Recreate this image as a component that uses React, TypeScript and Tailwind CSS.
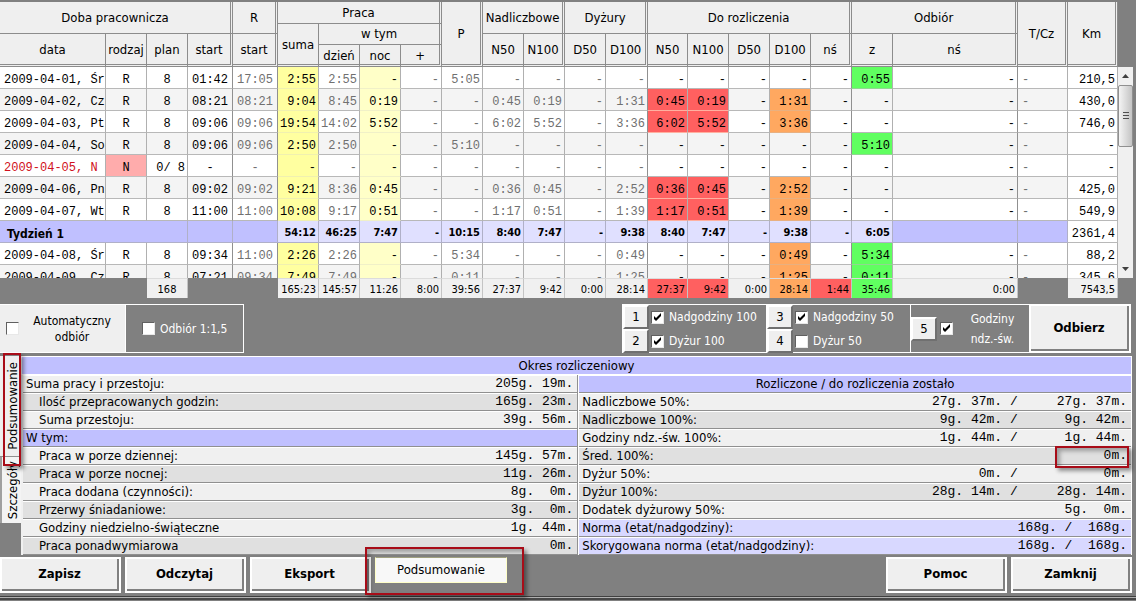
import { useState } from "react";
import type { ReactNode } from "react";
import clsx from "clsx";

type Align = "left" | "center" | "right";

type Column = {
  key: string;
  width: string;
  align: Align;
  muted?: boolean;
  groupEnd?: boolean;
};

const columns: Column[] = [
  { key: "data", width: "w-[106px]", align: "left" },
  { key: "rodzaj", width: "w-[41px]", align: "center" },
  { key: "plan", width: "w-[41px]", align: "center" },
  { key: "start", width: "w-[45px]", align: "center", groupEnd: true },
  { key: "rStart", width: "w-[45px]", align: "center", muted: true, groupEnd: true },
  { key: "suma", width: "w-[41px]", align: "right" },
  { key: "dzien", width: "w-[41px]", align: "right", muted: true },
  { key: "noc", width: "w-[41px]", align: "right" },
  { key: "plus", width: "w-[41px]", align: "right", muted: true },
  { key: "p", width: "w-[41px]", align: "right", muted: true },
  { key: "nadN50", width: "w-[41px]", align: "right", muted: true },
  { key: "nadN100", width: "w-[41px]", align: "right", muted: true },
  { key: "dyzD50", width: "w-[41px]", align: "right", muted: true },
  { key: "dyzD100", width: "w-[42px]", align: "right", muted: true, groupEnd: true },
  { key: "n50", width: "w-[40px]", align: "right" },
  { key: "n100", width: "w-[41px]", align: "right" },
  { key: "d50", width: "w-[41px]", align: "right" },
  { key: "d100", width: "w-[41px]", align: "right" },
  { key: "ns", width: "w-[41px]", align: "right", groupEnd: true },
  { key: "z", width: "w-[41px]", align: "right" },
  { key: "odbiorNs", width: "", align: "right", groupEnd: true },
  { key: "tcz", width: "w-[50px]", align: "left", muted: true },
  { key: "km", width: "w-[50px]", align: "right" },
];

const days: string[][] = [
  ["2009-04-01, Śr", "R", "8", "01:42", "17:05", "2:55", "2:55", "-", "-", "5:05", "-", "-", "-", "-", "-", "-", "-", "-", "-", "0:55", "-", "-", "210,5"],
  ["2009-04-02, Cz", "R", "8", "08:21", "08:21", "9:04", "8:45", "0:19", "-", "-", "0:45", "0:19", "-", "1:31", "0:45", "0:19", "-", "1:31", "-", "-", "-", "-", "430,0"],
  ["2009-04-03, Pt", "R", "8", "09:06", "09:06", "19:54", "14:02", "5:52", "-", "-", "6:02", "5:52", "-", "3:36", "6:02", "5:52", "-", "3:36", "-", "-", "-", "-", "746,0"],
  ["2009-04-04, So", "R", "8", "09:06", "09:06", "2:50", "2:50", "-", "-", "5:10", "-", "-", "-", "-", "-", "-", "-", "-", "-", "5:10", "-", "-", "-"],
  ["2009-04-05, N", "N", "0/ 8", "-", "-", "-", "-", "-", "-", "-", "-", "-", "-", "-", "-", "-", "-", "-", "-", "-", "-", "-", "-"],
  ["2009-04-06, Pn", "R", "8", "09:02", "09:02", "9:21", "8:36", "0:45", "-", "-", "0:36", "0:45", "-", "2:52", "0:36", "0:45", "-", "2:52", "-", "-", "-", "-", "425,0"],
  ["2009-04-07, Wt", "R", "8", "11:00", "11:00", "10:08", "9:17", "0:51", "-", "-", "1:17", "0:51", "-", "1:39", "1:17", "0:51", "-", "1:39", "-", "-", "-", "-", "549,9"],
];

const nextDays: string[][] = [
  ["2009-04-08, Śr", "R", "8", "09:34", "11:00", "2:26", "2:26", "-", "-", "5:34", "-", "-", "-", "0:49", "-", "-", "-", "0:49", "-", "5:34", "-", "-", "88,2"],
  ["2009-04-09, Cz", "R", "8", "07:21", "09:34", "7:49", "7:49", "-", "-", "0:11", "-", "-", "-", "1:25", "-", "-", "-", "1:25", "-", "0:11", "-", "-", "345,6"],
];

const week = ["54:12", "46:25", "7:47", "-", "10:15", "8:40", "7:47", "-", "9:38", "8:40", "7:47", "-", "9:38", "-", "6:05"];

const totals = ["", "", "168", "", "", "165:23", "145:57", "11:26", "8:00", "39:56", "27:37", "9:42", "0:00", "28:14", "27:37", "9:42", "0:00", "28:14", "1:44", "35:46", "0:00", "", "7543,5"];

const alignClass: Record<Align, string> = {
  left: "text-left pl-1",
  center: "text-center",
  right: "text-right pr-[2px]",
};

const Columns = () => (
  <colgroup>
    {columns.map((c) => (
      <col key={c.key} className={c.width} />
    ))}
  </colgroup>
);

const cellColor = (key: string, value: string, striped: boolean) => {
  if (key === "suma") return "bg-[#ffffa0] border-b-[#f0f0b0]";
  if (key === "noc") return "bg-[#ffffc8] border-b-[#f0f0c8]";
  if (key === "rodzaj" && value === "N") return "bg-[#ffacac] border-b-[#c0c0c0]";
  if (value !== "-") {
    if (key === "n50" || key === "n100") return "bg-[#ff6060] border-b-[#ffb0a0]";
    if (key === "d100") return "bg-[#ffa860] border-b-[#e8b080]";
    if (key === "z") return "bg-[#60ff60] border-b-[#90d890]";
  }
  if (key === "km") return "bg-white border-b-[#b8b8b8]";
  return striped ? "bg-[#f4f4f4] border-b-[#b8b8b8]" : "bg-white border-b-[#b8b8b8]";
};

const DayRow = ({ values, striped }: { values: string[]; striped: boolean }) => {
  const sunday = values[1] === "N";
  return (
    <tr className="h-[22px]">
      {columns.map((c, i) => (
        <td
          key={c.key}
          className={clsx(
            "border-r border-b pt-1 whitespace-pre",
            c.groupEnd ? "border-r-[#909090]" : "border-r-[#b0b0b0]",
            sunday && c.key === "plan" ? "text-right pr-[2px]" : alignClass[c.align],
            cellColor(c.key, values[i], striped),
            sunday && i === 0 ? "text-[#d01020]" : c.muted ? "text-[#707070]" : "text-black"
          )}
        >
          {values[i]}
        </td>
      ))}
    </tr>
  );
};

const WeekRow = () => (
  <tr className="h-[22px] font-['DejaVu_Sans_Condensed','Open_Sans',sans-serif] text-[11px] font-bold">
    <td colSpan={3} className="border-r border-b border-[#b0b0c8] bg-[#c0c0ff] pt-1 pl-[7px] text-xs">
      Tydzień 1
    </td>
    <td className="border-r border-b border-[#b0b0c8] bg-[#c0c0ff]" />
    <td className="border-r border-b border-[#b0b0c8] bg-[#c0c0ff]" />
    {week.map((value, i) => (
      <td key={i} className="border-r border-b border-[#b0b0c8] bg-[#e0e0ff] pt-[2px] pr-[2px] text-right">
        {value}
      </td>
    ))}
    <td className="border-r border-b border-[#b0b0c8] bg-[#c0c0ff]" />
    <td className="border-r border-b border-[#b0b0c8] bg-[#c0c0ff]" />
    <td className="border-r border-b border-[#b8b8b8] bg-white pt-1 pr-[2px] text-right font-['Liberation_Mono',monospace] text-xs font-normal">
      2361,4
    </td>
  </tr>
);

const Head = ({
  children,
  col = 1,
  row = 1,
  last,
  bottom,
}: {
  children: ReactNode;
  col?: number;
  row?: number;
  last?: boolean;
  bottom?: boolean;
}) => (
  <th
    colSpan={col}
    rowSpan={row}
    className={clsx(
      "border-[#8c8c8c] bg-[#efefef] font-normal",
      last ? "border-r-3 [border-right-style:double]" : "border-r",
      bottom ? "border-b-3 pt-[2px] [border-bottom-style:double]" : "border-b"
    )}
  >
    {children}
  </th>
);

const TimeSheet = () => (
  <section>
    <div className="pt-[2px] pr-[18px]">
      <table className="w-full table-fixed border-separate border-spacing-0 text-[13px] leading-4">
        <Columns />
        <thead>
          <tr className="h-[22px]">
            <Head col={4} row={2} last>Doba pracownicza</Head>
            <Head row={2} last>R</Head>
            <Head col={4} last>Praca</Head>
            <Head row={4} last bottom>P</Head>
            <Head col={2} row={2} last>Nadliczbowe</Head>
            <Head col={2} row={2} last>Dyżury</Head>
            <Head col={5} row={2} last>Do rozliczenia</Head>
            <Head col={2} row={2} last>Odbiór</Head>
            <Head row={4} last bottom>T/Cz</Head>
            <Head row={4} last bottom>Km</Head>
          </tr>
          <tr className="h-[10px]">
            <Head row={3} bottom>suma</Head>
            <Head col={3} row={2} last>w tym</Head>
          </tr>
          <tr className="h-[11px]">
            <Head row={2} bottom>data</Head>
            <Head row={2} bottom>rodzaj</Head>
            <Head row={2} bottom>plan</Head>
            <Head row={2} last bottom>start</Head>
            <Head row={2} last bottom>start</Head>
            <Head row={2} bottom>N50</Head>
            <Head row={2} last bottom>N100</Head>
            <Head row={2} bottom>D50</Head>
            <Head row={2} last bottom>D100</Head>
            <Head row={2} bottom>N50</Head>
            <Head row={2} bottom>N100</Head>
            <Head row={2} bottom>D50</Head>
            <Head row={2} bottom>D100</Head>
            <Head row={2} last bottom>nś</Head>
            <Head row={2} bottom>z</Head>
            <Head row={2} last bottom>nś</Head>
          </tr>
          <tr className="h-[22px]">
            <Head bottom>dzień</Head>
            <Head bottom>noc</Head>
            <Head last bottom>+</Head>
          </tr>
        </thead>
      </table>
    </div>

    <div className="flex h-[211px] overflow-hidden pr-[3px]">
      <div className="min-w-0 flex-1">
        <table className="w-full table-fixed border-separate border-spacing-0 font-['Liberation_Mono',monospace] text-xs leading-4">
          <Columns />
          <tbody>
            {days.map((d, i) => (
              <DayRow key={d[0]} values={d} striped={i % 2 === 1} />
            ))}
            <WeekRow />
            {nextDays.map((d, i) => (
              <DayRow key={d[0]} values={d} striped={i % 2 === 1} />
            ))}
          </tbody>
        </table>
      </div>
      <div className="flex w-[15px] flex-col bg-[#f0f0f0]">
        <svg viewBox="0 0 15 18" className="h-[18px] w-[15px]">
          <path d="M4 11 L7.5 7 L11 11 Z" fill="#404040" />
        </svg>
        <div className="flex h-[62px] flex-col items-center justify-center gap-px rounded-xs border border-[#909090] bg-linear-to-r from-[#f4f4f4] to-[#c4c4c4]">
          <span className="h-[2px] w-[6px] border-t border-[#505050]" />
          <span className="h-[2px] w-[6px] border-t border-[#505050]" />
          <span className="h-[2px] w-[6px] border-t border-[#505050]" />
        </div>
        <svg viewBox="0 0 15 18" className="mt-auto h-[18px] w-[15px]">
          <path d="M4 7 L7.5 11 L11 7 Z" fill="#404040" />
        </svg>
      </div>
    </div>

    <div className="pr-[18px]">
      <table className="w-full table-fixed border-separate border-spacing-0 text-[11px] leading-4">
        <Columns />
        <tbody>
          <tr className="h-5">
            {columns.map((c, i) => (
              <td
                key={c.key}
                className={clsx(
                  "pt-[2px]",
                  totals[i] && "border-t border-r border-t-[#dcdcdc] border-r-[#c4c4c4]",
                  c.key === "plan" ? "text-center" : "pr-[2px] text-right",
                  totals[i] &&
                    (c.key === "n50" || c.key === "n100" || c.key === "ns"
                      ? "bg-[#ff6060]"
                      : c.key === "d100"
                        ? "bg-[#ffa860]"
                        : c.key === "z"
                          ? "bg-[#60ff60]"
                          : "bg-[#f0f0f0]")
                )}
              >
                {totals[i]}
              </td>
            ))}
          </tr>
        </tbody>
      </table>
    </div>
  </section>
);

const Check = ({ checked, onChange, id }: { checked: boolean; onChange: () => void; id: string }) => (
  <span className="relative flex size-[13px] shrink-0">
    <input
      id={id}
      type="checkbox"
      checked={checked}
      onChange={onChange}
      className="size-[13px] appearance-none border border-t-[#606060] border-r-[#e8e8e8] border-b-[#e8e8e8] border-l-[#606060] bg-white"
    />
    {checked && (
      <svg viewBox="0 0 13 13" className="pointer-events-none absolute inset-0">
        <path d="M3 5 L5 7 L10 2 V5 L5 10 L3 8 Z" fill="#000" />
      </svg>
    )}
  </span>
);

const NumberButton = ({ children }: { children: ReactNode }) => (
  <button className="h-6 w-[26px] border-2 border-t-white border-r-[#707070] border-b-[#707070] border-l-white bg-[#efefef] text-[13px] leading-4">
    {children}
  </button>
);

const BigButton = ({ children, className }: { children: ReactNode; className: string }) => (
  <button className={clsx("border-2 border-white bg-[#efefef] text-[13px] font-bold", className)}>
    <span className="flex size-full items-center justify-center border-r-2 border-b-2 border-[#808080]">{children}</span>
  </button>
);

const Toolbar = () => {
  const [checks, setChecks] = useState<Record<string, boolean>>({
    auto: false,
    ratio: false,
    nad100: true,
    dyz100: true,
    nad50: true,
    dyz50: false,
    ns: true,
  });
  const check = (id: string) => (
    <Check id={id} checked={checks[id]} onChange={() => setChecks({ ...checks, [id]: !checks[id] })} />
  );

  return (
    <section className="mt-[6px] flex h-[49px] pr-[5px] text-xs leading-4">
      <div className="flex w-[125px] items-center border-t border-b border-white bg-[#efefef] pl-[6px]">
        {check("auto")}
        <label htmlFor="auto" className="flex-1 text-center">
          Automatyczny
          <br />
          odbiór
        </label>
      </div>
      <div className="flex w-[119px] items-center gap-[5px] border border-white pl-4 text-white">
        {check("ratio")}
        <label htmlFor="ratio">Odbiór 1:1,5</label>
      </div>
      <div className="ml-auto flex border-t border-b border-l border-white text-white">
        {[
          [["1", "nad100", "Nadgodziny 100"], ["2", "dyz100", "Dyżur 100"]],
          [["3", "nad50", "Nadgodziny 50"], ["4", "dyz50", "Dyżur 50"]],
        ].map((group, i) => (
          <div key={i} className="w-[144px] border-r border-white">
            {group.map(([no, id, text]) => (
              <div key={id} className="flex h-6 items-center gap-[2px]">
                <span className="text-black">
                  <NumberButton>{no}</NumberButton>
                </span>
                {check(id)}
                <label htmlFor={id} className="pl-[3px] whitespace-nowrap">
                  {text}
                </label>
              </div>
            ))}
          </div>
        ))}
        <div className="flex w-[118px] items-center gap-[3px]">
          <span className="text-black">
            <NumberButton>5</NumberButton>
          </span>
          {check("ns")}
          <label htmlFor="ns" className="flex-1 text-center leading-5">
            Godziny
            <br />
            ndz.-św.
          </label>
        </div>
      </div>
      <BigButton className="w-[102px]">Odbierz</BigButton>
    </section>
  );
};

type SummaryRow = { label: string; value?: string; kind?: "head" | "norm"; level?: number; marked?: boolean };

const leftRows: SummaryRow[] = [
  { label: "Suma pracy i przestoju:", value: "205g. 19m." },
  { label: "Ilość przepracowanych godzin:", value: "165g. 23m.", level: 1 },
  { label: "Suma przestoju:", value: "39g. 56m.", level: 1 },
  { label: "W tym:", kind: "head" },
  { label: "Praca w porze dziennej:", value: "145g. 57m.", level: 1 },
  { label: "Praca w porze nocnej:", value: "11g. 26m.", level: 1 },
  { label: "Praca dodana (czynności):", value: "8g.  0m.", level: 1 },
  { label: "Przerwy śniadaniowe:", value: "3g.  0m.", level: 1 },
  { label: "Godziny niedzielno-świąteczne", value: "1g. 44m.", level: 1 },
  { label: "Praca ponadwymiarowa", value: "0m.", level: 1 },
];

const rightRows: SummaryRow[] = [
  { label: "Nadliczbowe 50%:", value: "27g. 37m. /     27g. 37m." },
  { label: "Nadliczbowe 100%:", value: "9g. 42m. /      9g. 42m." },
  { label: "Godziny ndz.-św. 100%:", value: "1g. 44m. /      1g. 44m." },
  { label: "Śred. 100%:", value: "0m.", marked: true },
  { label: "Dyżur 50%:", value: "0m. /           0m." },
  { label: "Dyżur 100%:", value: "28g. 14m. /     28g. 14m." },
  { label: "Dodatek dyżurowy 50%:", value: "5g.  0m." },
  { label: "Norma (etat/nadgodziny):", value: "168g. /  168g.", kind: "norm" },
  { label: "Skorygowana norma (etat/nadgodziny):", value: "168g. /  168g.", kind: "norm" },
];

const SummaryTable = ({ rows, title }: { rows: SummaryRow[]; title?: string }) => (
  <table className="w-full border-separate border-spacing-0">
    {title && (
      <thead>
        <tr className="h-[18px]">
          <th colSpan={2} className="border-t border-b border-t-white border-b-[#909090] bg-[#c0c0ff] font-normal">
            {title}
          </th>
        </tr>
      </thead>
    )}
    <tbody>
      {rows.map((r, i) => {
        const tone = clsx(
          "border-t border-b border-t-white border-b-[#909090]",
          r.kind === "head"
            ? "bg-[#c0c0ff]"
            : r.kind === "norm"
              ? "bg-[#d8d8ff]"
              : i % 2 === 1
                ? "bg-[#e0e0e0]"
                : "bg-[#f0f0f0]"
        );
        return (
          <tr key={r.label} className="h-[18px]">
            <th scope="row" className={clsx(tone, "text-left font-normal", r.level ? "pl-4" : "pl-[3px]")}>
              {r.label}
            </th>
            <td
              className={clsx(
                tone,
                "pr-1 text-right font-['Liberation_Mono',monospace] whitespace-pre",
                r.marked && "relative"
              )}
            >
              {r.value}
              {r.marked && (
                <span className="absolute -top-[2px] right-[2px] h-[22px] w-[74px] border-2 border-[#a80c18] shadow-[3px_3px_4px_rgba(0,0,0,0.4),inset_3px_3px_4px_rgba(0,0,0,0.3)]" />
              )}
            </td>
          </tr>
        );
      })}
    </tbody>
  </table>
);

const Summary = () => (
  <section className="mt-[3px] flex pr-[4px] text-[13px] leading-4">
    <div className="relative w-[21px] shrink-0">
      <div className="flex flex-col">
        <button className="flex h-[101px] items-center justify-center border-b border-[#909090] bg-[#efefef] pl-1">
          <span className="rotate-180 [writing-mode:vertical-rl]">Podsumowanie</span>
        </button>
        <button className="flex h-[66px] items-center justify-center border-l-2 border-[#a0a0a0] bg-[#f4f4f4] pl-[2px]">
          <span className="rotate-180 [writing-mode:vertical-rl]">Szczegóły</span>
        </button>
      </div>
      <div className="pointer-events-none absolute -top-[3px] left-[3px] h-[113px] w-[18px] border-2 border-[#a80c18] shadow-[3px_3px_4px_rgba(0,0,0,0.4)]" />
    </div>
    <div className="min-w-0 flex-1 border-t border-r border-white">
      <h2 className="h-[17px] border-l border-white bg-[#c0c0ff] text-center leading-[18px]">Okres rozliczeniowy</h2>
      <div className="grid grid-cols-[251fr_249fr] border-t border-white">
        <div className="border-r border-[#909090] bg-[#f0f0f0] pl-[2px]">
          <SummaryTable rows={leftRows} />
        </div>
        <div className="border-l border-white">
          <SummaryTable rows={rightRows} title="Rozliczone / do rozliczenia zostało" />
        </div>
      </div>
    </div>
  </section>
);

const Footer = () => (
  <footer>
    <div className="flex h-[41px] items-start gap-1 pt-[2px] pr-[4px]">
      <BigButton className="h-9 w-[121px]">Zapisz</BigButton>
      <BigButton className="h-9 w-[121px]">Odczytaj</BigButton>
      <BigButton className="h-9 w-[121px]">Eksport</BigButton>
      <div className="relative">
        <button className="h-[26px] w-[132px] border border-t-[#a0a080] border-r-[#ffffc8] border-b-[#ffffc8] border-l-[#ffffc8] bg-[#f8f8f8] text-[13px]">
          Podsumowanie
        </button>
        <div className="pointer-events-none absolute -top-[10px] -left-[10px] h-[48px] w-[159px] border-2 border-[#a80c18] shadow-[3px_3px_4px_rgba(0,0,0,0.4),inset_3px_3px_4px_rgba(0,0,0,0.3)]" />
      </div>
      <BigButton className="ml-auto h-9 w-[121px]">Pomoc</BigButton>
      <BigButton className="h-9 w-[121px]">Zamknij</BigButton>
    </div>
    <div className="h-1 border-t border-b-2 border-t-[#404040] border-b-[#484848] bg-[#b0b0b0]" />
  </footer>
);

export default function App() {
  return (
    <main className="min-h-screen bg-[#808080] font-['DejaVu_Sans_Condensed','Open_Sans',sans-serif] text-black">
      <TimeSheet />
      <Toolbar />
      <Summary />
      <Footer />
    </main>
  );
}
